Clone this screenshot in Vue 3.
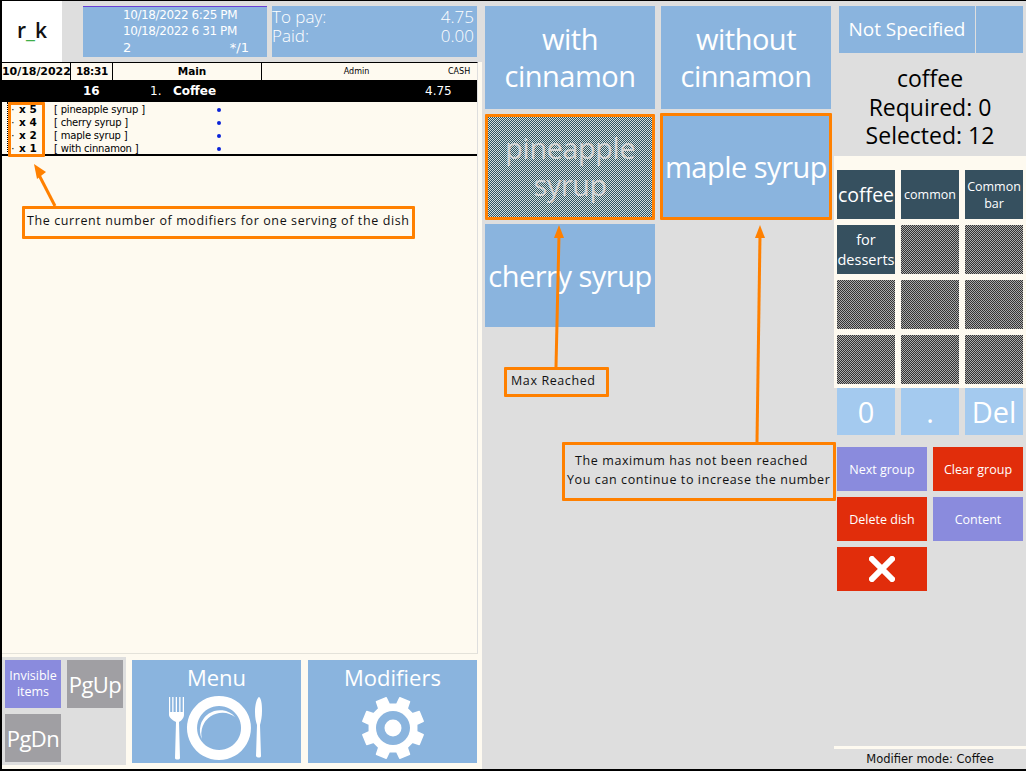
<script setup>
const rows = [
  { n: 5, name: 'pineapple syrup' },
  { n: 4, name: 'cherry syrup' },
  { n: 2, name: 'maple syrup' },
  { n: 1, name: 'with cinnamon' }
]
const cats = [
  { t: 'coffee', c: 'big' }, { t: 'common', c: 'small' }, { t: 'Common bar', c: 'small' },
  { t: 'for desserts', c: 'medium' }, { h: 1 }, { h: 1 }, { h: 1 }, { h: 1 }, { h: 1 }, { h: 1 }, { h: 1 }, { h: 1 }
]
const gear = (() => {
  const pts = []
  const n = 8
  for (let i = 0; i < n; i++) {
    const a = (i * 2 * Math.PI) / n - Math.PI / 8
    const w = 0.17
    const p = (r, t) => `${(32 + r * Math.cos(t)).toFixed(1)} ${(32 + r * Math.sin(t)).toFixed(1)}`
    pts.push(`${i ? 'L' : 'M'}${p(24, a - w - 0.07)}`, `L${p(31, a - w)}`, `L${p(31, a + w)}`, `L${p(24, a + w + 0.07)}`)
  }
  return pts.join(' ') + ' Z'
})()
</script>

<template>
  <div class="screen">
    <section class="left">
      <header class="top">
        <div class="logo"><span>r<i>_</i>k</span></div>
        <div class="order">
          <div class="pl">10/18/2022 6:25 PM</div>
          <div class="pl">10/18/2022 6 31 PM</div>
          <div class="ol"><span>2</span><span>*/1</span></div>
        </div>
        <div class="pay">
          <div><span>To pay:</span><span>4.75</span></div>
          <div><span>Paid:</span><span>0.00</span></div>
        </div>
      </header>
      <div class="receipt">
        <div class="meta">
          <b class="m1">10/18/2022</b><b class="m2">18:31</b><b class="m3">Main</b>
          <span class="m4">Admin</span><span class="m5">CASH</span>
        </div>
        <div class="dish"><b class="d1">16</b><span class="d2">1.</span><b class="d3">Coffee</b><span class="d4">4.75</span></div>
        <div class="mods">
          <div v-for="r in rows" :key="r.name" class="mod">
            <span class="dots">··</span><b class="cnt">x {{ r.n }}</b>
            <span class="nm">[ {{ r.name }} ]</span><i class="dot"></i>
          </div>
        </div>
      </div>
      <footer class="bottom">
        <div class="pager">
          <button class="pur">Invisible<br>items</button>
          <button class="gry">PgUp</button>
          <button class="gry">PgDn</button>
        </div>
        <button class="nav">
          <span>Menu</span>
          <svg width="96" height="65" viewBox="0 0 96 65" fill="#fff">
            <path d="M0 1h1.200v15h2V1h1.300v15h2.200V1H8v15h2.200V1h1.300v15h2.200V1H15v18c0 3-3 6-5 7l1 36c0 2-5 2-5 0l1-36c-2-1-7-4-7-7z"/>
            <path fill-rule="evenodd" d="M50 0a32 32 0 1 1-.1 0zM50 10a22 22 0 1 0 .1 0z"/>
            <path d="M33 43A20 20 0 0 1 66 21 A21 21 0 0 0 33 43z"/>
            <path d="M90 1c2 1 3 6 3 14 0 6-1 10-2 14l1 31c0 2-4 2-5 0l1-31c-1-3-2-7-2-13 0-8 2-14 4-15z"/>
          </svg>
        </button>
        <button class="nav">
          <span>Modifiers</span>
          <svg width="64" height="64" viewBox="0 0 64 64">
            <path :d="gear" fill="#fff" stroke="#fff" stroke-width="1.500" stroke-linejoin="round"/>
            <circle cx="32" cy="32" r="17" fill="#8ab4de"/>
            <circle cx="32" cy="32" r="8.500" fill="#fff"/>
          </svg>
        </button>
      </footer>
    </section>

    <section class="center">
      <button class="mb two">with<br>cinnamon</button>
      <button class="mb two">without<br>cinnamon</button>
      <button class="mb two dis">pineapple<br>syrup</button>
      <button class="mb">maple syrup</button>
      <button class="mb">cherry syrup</button>
    </section>

    <section class="right">
      <div class="spec"><button>Not Specified</button><button></button></div>
      <div class="info">coffee<br>Required: 0<br>Selected: 12</div>
      <div class="cats">
        <template v-for="(c, i) in cats" :key="i">
          <div v-if="c.h" class="hatch"></div>
          <button v-else class="cat" :class="c.c">{{ c.t }}</button>
        </template>
      </div>
      <div class="num"><button>0</button><button>.</button><button>Del</button></div>
      <div class="acts">
        <button class="pur">Next group</button>
        <button class="red">Clear group</button>
        <button class="red">Delete dish</button>
        <button class="pur">Content</button>
        <button class="red x">
          <svg width="26" height="26" viewBox="0 0 26 26"><path d="M3 3 23 23M23 3 3 23" stroke="#fff" stroke-width="6" stroke-linecap="square"/></svg>
        </button>
      </div>
      <div class="mode">Modifier mode: Coffee</div>
    </section>

    <svg class="arrows" width="1026" height="771" viewBox="0 0 1026 771" fill="#ff8000" stroke="none">
      <g stroke="#ff8000" stroke-width="3" fill="none">
        <path d="M55 206 39 175"/>
        <path d="M556 367 559 235"/>
        <path d="M757 442 760 235"/>
      </g>
      <path d="M34 164 46 172 37 179z"/>
      <path d="M559 225 564 238 554 238z"/>
      <path d="M760 225 765 238 755 238z"/>
    </svg>
    <div class="note n0"></div>
    <div class="note n1">The current number of modifiers for one serving of the dish</div>
    <div class="note n2">Max Reached</div>
    <div class="note n3"><span>The maximum has not been reached</span><span>You can continue to increase the number</span></div>
    <div class="note n4"></div>
    <div class="note n5"></div>
  </div>
</template>

<style scoped>
.screen { position: relative; box-sizing: border-box; width: 1026px; height: 771px; background: #dedede; border: solid #000; border-width: 1px 0 2px 2px; display: flex; overflow: hidden; font-family: "DejaVu Sans", sans-serif; }
button { border: 0; padding: 0; margin: 0; color: #fff; font-family: "Open Sans", sans-serif; cursor: default; display: block; }
.left { width: 480px; display: flex; flex-direction: column; background: #fefaf0; }
.top { height: 61px; background: #dedede; display: flex; flex: none; }
.logo { width: 60px; background: #fff; display: flex; align-items: center; justify-content: center; font: 600 21px "Open Sans", sans-serif; color: #111; padding-bottom: 3px; box-sizing: border-box; }
.logo i { font-style: normal; color: #3fae49; }
.order { margin: 5px 0 5px 21px; width: 184px; box-sizing: border-box; background: #8ab4de; border-top: 1px solid #6a3fd6; color: #fff; font: 12px/15px "DejaVu Sans", sans-serif; padding-top: 1px; }
.pl { padding-left: 40px; white-space: nowrap; letter-spacing: -.4px; }
.pl + .pl { margin-top: 1px; }
.ol { display: flex; justify-content: space-between; padding: 1px 18px 0 40px; font-size: 13px; }
.pay { margin: 5px 0 5px 5px; width: 205px; box-sizing: border-box; background: #8ab4de; color: #fff; font: 300 17px/19px "Open Sans", sans-serif; padding: 1px 3px 0 0; }
.pay div { display: flex; justify-content: space-between; }
.receipt { flex: 1; width: 475px; border-right: 1px solid #dedede; border-top: 1px solid #000; border-bottom: 1px solid #e4e2da; color: #000; }
.meta { height: 17px; position: relative; display: flex; align-items: center; font-size: 10.500px; white-space: nowrap; }
.m1 { width: 69px; flex: none; box-sizing: border-box; border-right: 1px solid #000; height: 17px; line-height: 17px; font-size: 11px; letter-spacing: -.05px; overflow: visible; }
.m2 { width: 42px; box-sizing: border-box; border-right: 1px solid #000; height: 17px; line-height: 17px; padding-left: 5px; letter-spacing: -.3px; }
.m3 { width: 149px; box-sizing: border-box; border-right: 1px solid #000; height: 17px; line-height: 17px; text-align: center; padding-left: 10px; }
.m4 { width: 169px; box-sizing: border-box; text-align: center; font-size: 8px; padding-left: 20px; }
.m5 { font-size: 8px; padding-left: 17px; }
.dish { height: 22px; background: #000; color: #fff; display: flex; align-items: center; font-size: 12px; }
.d1 { margin-left: 81px; width: 67px; }
.d2 { width: 23px; }
.d3 { width: 252px; }
.mods { border-bottom: 2px solid #000; box-sizing: border-box; padding: 1px 0 0 4px; height: 54px; position: relative; }
.mods::before { content: ""; position: absolute; left: 5px; top: 0; bottom: 2px; border-left: 1px dotted #000; }
.mod { height: 13px; line-height: 13px; display: flex; align-items: center; font-size: 10px; white-space: nowrap; }
.dots { width: 6px; margin-left: 2px; font-size: 10px; }
.cnt { width: 35px; margin-left: 5px; font-size: 10.500px; }
.nm { width: 163px; letter-spacing: -.2px; }
.dot { width: 4px; height: 4px; border-radius: 50%; background: #0a22d8; }
.bottom { height: 115px; flex: none; display: flex; padding-top: 3px; box-sizing: border-box; }
.pager { width: 124px; height: 108px; background: #dedede; display: grid; grid-template-columns: 56px 56px; grid-auto-rows: 48px; gap: 6px; padding: 3px; box-sizing: border-box; flex: none; }
.pur { background: #8a8bdd; }
.gry { background: #a09fa3; font-size: 22px; letter-spacing: -.5px; }
.pager .pur { font-size: 12.500px; line-height: 16px; }
.nav { width: 169px; height: 103px; margin: 3px 0 0 6px; background: #8ab4de; font-size: 22px; display: flex; flex-direction: column; align-items: center; line-height: 30px; padding-top: 2px; box-sizing: border-box; }
.nav + .nav { margin-left: 7px; }
.nav svg { margin-top: 4px; }
.center { width: 352px; padding: 5px 0 0 3px; display: grid; grid-template-columns: 170px 170px; grid-auto-rows: 103px; column-gap: 6px; row-gap: 6px; align-content: start; box-sizing: border-box; }
.mb { background: #8ab4de; font-size: 29px; line-height: 37px; letter-spacing: -.5px; white-space: nowrap; }
.mb.two { padding-bottom: 2px; }
.mb.dis { color: #d4d4d4; background-color: #fff; background-image: repeating-conic-gradient(#2e5560 0 25%, #d5e0e0 0 50%); background-size: 2px 2px; }
.right { flex: 1; display: flex; flex-direction: column; }
.spec { display: flex; gap: 1px; margin: 5px 3px 0 5px; height: 47px; flex: none; }
.spec button { background: #8ab4de; font-size: 19px; letter-spacing: -.05px; width: 47px; padding-bottom: 2px; }
.spec button:first-child { width: 136px; }
.info { height: 103px; flex: none; box-sizing: border-box; padding-top: 11px; text-align: center; font: 23px/28.500px "Open Sans", sans-serif; color: #000; }
.cats { background: #fefaf0; height: 232px; box-sizing: border-box; padding: 14px 3px 0; display: grid; grid-template-columns: repeat(3, 58px); grid-auto-rows: 49px; gap: 6px; flex: none; }
.cat { background: #36505f; }
.cat.big { font-size: 19.500px; }
.cat.small { font-size: 12.500px; line-height: 17px; }
.cat.medium { font-size: 14.500px; line-height: 20px; }
.hatch { background-image: repeating-conic-gradient(#333 0 25%, #aaa 0 50%); background-size: 2px 2px; }
.num { display: grid; grid-template-columns: repeat(3, 58px); gap: 6px; padding: 0 3px; height: 47px; flex: none; }
.num button { background: #a4caef; font-size: 29px; }
.acts { display: grid; grid-template-columns: 90px 90px; grid-auto-rows: 44px; gap: 6px; padding: 12px 0 0 3px; flex: none; }
.acts button { font-size: 12.500px; }
.red { background: #e12d0b; }
.x { display: flex; align-items: center; justify-content: center; }
.mode { margin-top: auto; border-top: 3px solid #fefaf0; height: 20px; box-sizing: content-box; text-align: center; font: 11.500px/19px "DejaVu Sans", sans-serif; letter-spacing: 0; color: #111; padding-top: 1px; margin-bottom: -1px; }
.arrows { position: absolute; left: -2px; top: -1px; pointer-events: none; }
.note { position: absolute; box-sizing: border-box; border: 3px solid #ff8000; border-radius: 1px; color: #111; font: 12.500px "Open Sans", sans-serif; letter-spacing: .6px; white-space: nowrap; }
.n0 { left: 6px; top: 101px; width: 37px; height: 55px; }
.n1 { left: 20px; top: 205px; width: 393px; height: 33px; line-height: 24px; padding-left: 2px; }
.n2 { left: 502px; top: 366px; width: 105px; height: 30px; line-height: 22px; padding-left: 4px; }
.n3 { left: 560px; top: 441px; width: 274px; height: 59px; display: flex; flex-direction: column; padding-top: 6px; line-height: 19px; }
.n3 span:first-child { padding-left: 10px; }
.n3 span:last-child { padding-left: 2px; }
.n4 { left: 483px; top: 113px; width: 170px; height: 106px; }
.n5 { left: 658px; top: 112px; width: 172px; height: 107px; }
</style>
